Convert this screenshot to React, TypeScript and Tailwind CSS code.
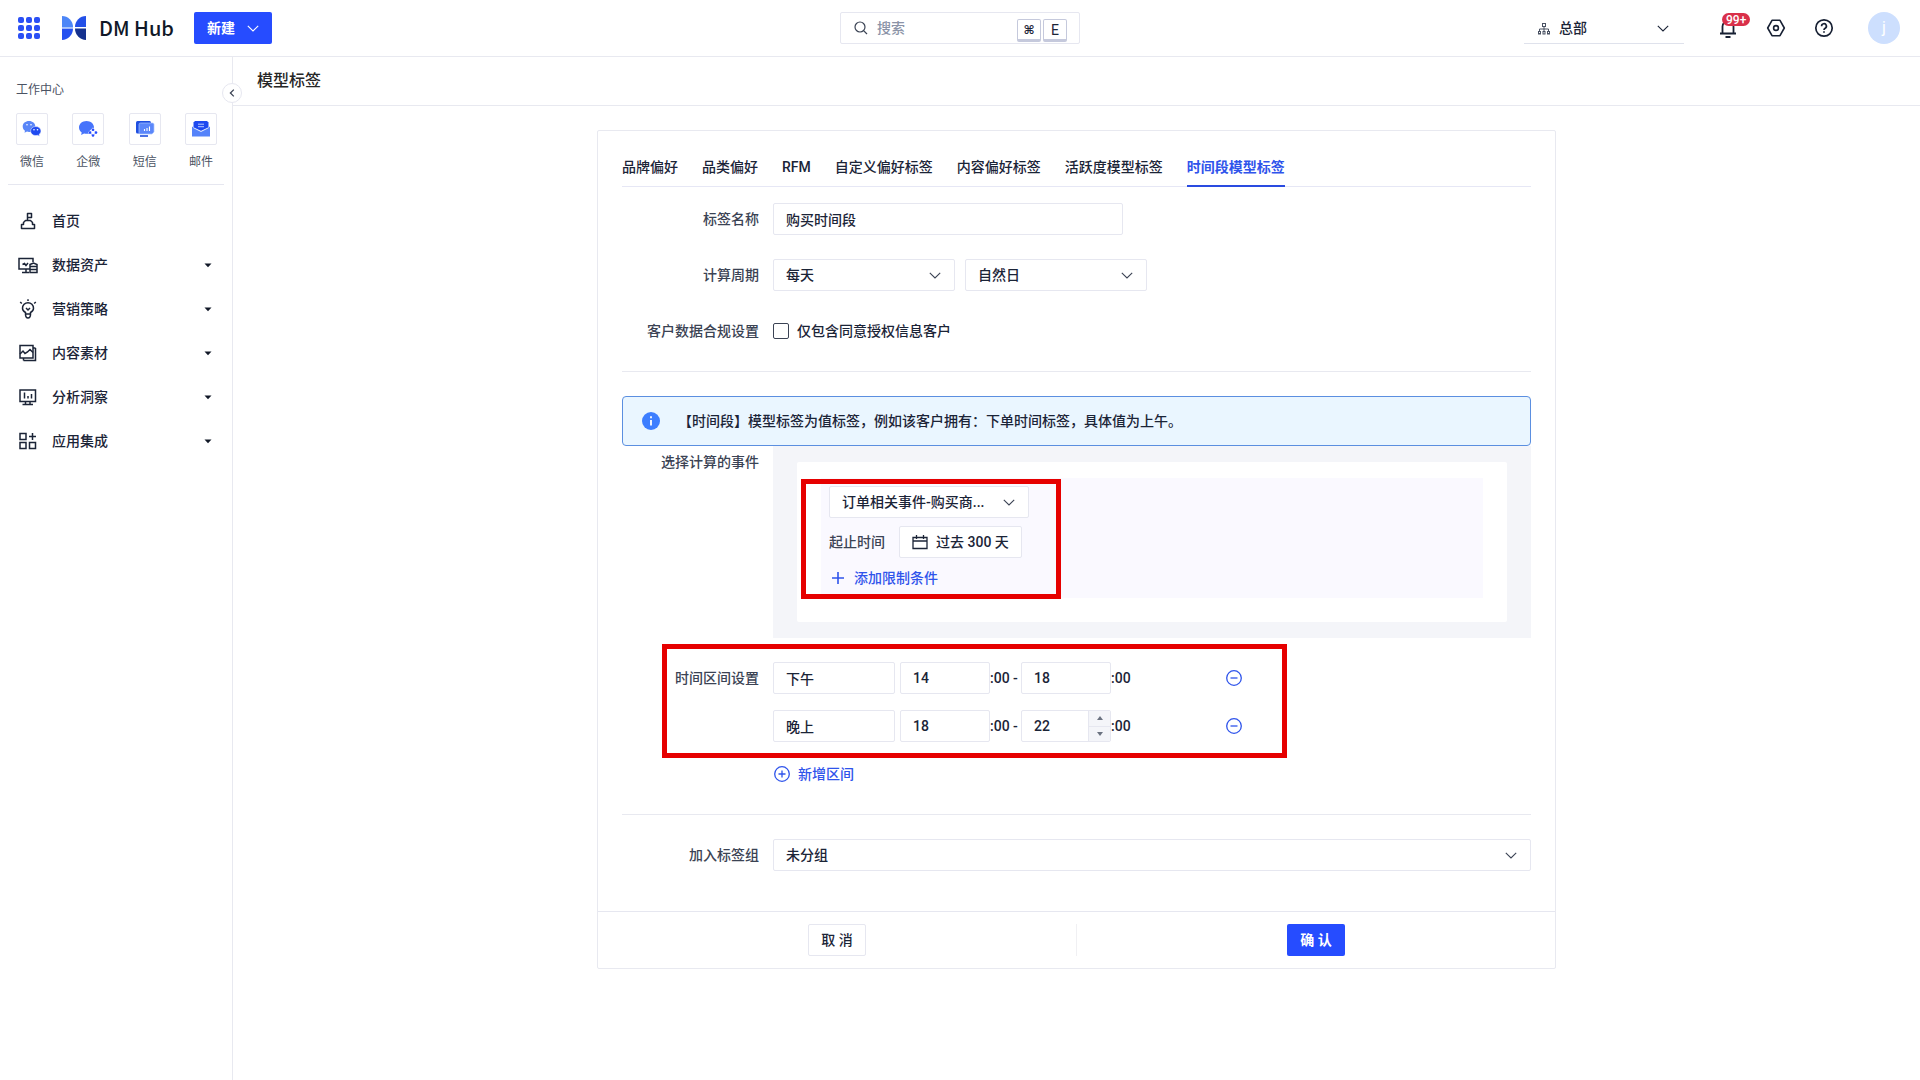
import { useState } from 'react';
import type { ReactNode } from 'react';

const quickLinks = [
  { label: '微信', icon: <WechatIcon /> },
  { label: '企微', icon: <WecomIcon /> },
  { label: '短信', icon: <SmsIcon /> },
  { label: '邮件', icon: <MailIcon /> },
];

const menu = [
  { label: '首页', icon: <HomeIcon />, children: false },
  { label: '数据资产', icon: <DataIcon />, children: true },
  { label: '营销策略', icon: <BulbIcon />, children: true },
  { label: '内容素材', icon: <ContentIcon />, children: true },
  { label: '分析洞察', icon: <InsightIcon />, children: true },
  { label: '应用集成', icon: <AppsIcon />, children: true },
];

const tabs = ['品牌偏好', '品类偏好', 'RFM', '自定义偏好标签', '内容偏好标签', '活跃度模型标签', '时间段模型标签'];

const ranges = [
  { name: '下午', from: 14, to: 18, stepper: false },
  { name: '晚上', from: 18, to: 22, stepper: true },
];

const fieldClass = 'h-8 rounded-xs border border-[#e6e7f0] bg-white text-sm text-[#1b2437] outline-none focus:border-[#264cff]';

export default function App() {
  return (
    <div className="flex min-h-screen flex-col bg-white font-['Roboto','Noto_Sans_CJK_SC',sans-serif] text-sm text-[#1b2437]">
      <Header />
      <div className="flex flex-1">
        <Sidebar />
        <main className="min-w-0 flex-1">
          <h1 className="border-b border-[#e8e9f0] py-3 pl-6 text-base font-medium text-[#262626]">模型标签</h1>
          <TagForm />
        </main>
      </div>
    </div>
  );
}

function Header() {
  return (
    <header className="flex h-[57px] items-center border-b border-[#e8e9f0] px-4">
      <div className="flex flex-1 items-center">
        <button aria-label="应用" className="flex size-[26px] items-center justify-center">
          <svg width="22" height="22" viewBox="0 0 22 22" fill="#2b50f5">
            {[0, 8, 16].map((y) => [0, 8, 16].map((x) => <rect key={`${x}-${y}`} x={x} y={y} width="6" height="6" rx="2" />))}
          </svg>
        </button>
        <a href="#" className="ml-5 flex items-center gap-[13px]">
          <svg width="24" height="24" viewBox="0 0 24 24">
            <path d="M0 0A11 11 0 0 1 11 11H0Z" fill="#4c86f7" />
            <path d="M24 0A11 11 0 0 0 13 11H24Z" fill="#2350e8" />
            <path d="M0 12.5H11A11.5 11.5 0 0 1 0 24Z" fill="#2450f0" />
            <path d="M24 12.5H13A11.5 11.5 0 0 0 24 24Z" fill="#15328f" />
            <path d="M0 11H11V12.500H0Z" fill="#a9c5fb" />
          </svg>
          <span className="font-['Noto_Sans_CJK_SC',sans-serif] text-xl leading-6 font-medium text-[#111827]">DM Hub</span>
        </a>
        <button className="ml-5 flex h-8 w-[78px] items-center justify-center gap-3 rounded-xs bg-[#264cff] font-bold text-white">
          新建
          <Chevron />
        </button>
      </div>

      <div className="relative w-60">
        <svg className="absolute top-[9px] left-[14px]" width="14" height="14" viewBox="0 0 14 14" fill="none" stroke="#3b4354" strokeWidth="1.2">
          <circle cx="6" cy="6" r="5" />
          <path d="M9.600 9.600 13 13" />
        </svg>
        <input type="search" aria-label="搜索" placeholder="搜索" className={`${fieldClass} w-full pr-16 pl-9 font-medium placeholder:text-[#8b93a7]`} />
        <div className="absolute top-[7px] right-[13px] flex gap-0.5 text-xs">
          <kbd className="flex h-[23px] w-6 items-center justify-center rounded-xs border border-b-3 border-[#c5c9dc] bg-white font-['DejaVu_Sans','Noto_Sans_CJK_SC',sans-serif] font-bold">⌘</kbd>
          <kbd className="flex h-[23px] w-6 items-center justify-center rounded-xs border border-b-3 border-[#c5c9dc] bg-white font-['Roboto',sans-serif] text-sm">E</kbd>
        </div>
      </div>

      <div className="flex flex-1 items-center justify-end">
        <div className="relative w-40">
          <svg className="absolute top-[11px] left-[14px]" width="12" height="12" viewBox="0 0 12 12" fill="none" stroke="#4a5263">
            <rect x="4.500" y=".5" width="3" height="3" />
            <rect x=".5" y="8.500" width="2" height="2.500" />
            <rect x="5" y="8.500" width="2" height="2.500" />
            <rect x="9.500" y="8.500" width="2" height="2.500" />
            <path d="M6 3.500V8.500M1.500 8.500V6H10.500V8.500" />
          </svg>
          <select aria-label="组织" className="h-8 w-full appearance-none border-b border-[#dfe2ec] bg-transparent pl-[35px] font-medium outline-none">
            <option>总部</option>
          </select>
          <Chevron className="pointer-events-none absolute top-[13px] right-[15px]" />
        </div>
        <button aria-label="通知" className="relative ml-8 flex size-6 items-center justify-center">
          <svg width="20" height="20" viewBox="0 0 20 20" fill="none" stroke="#172033" strokeWidth="1.8">
            <path d="M4.500 15.500V8.500a5.500 5.500 0 0 1 11 0V15.500M2 15.500H18M7.500 19H12.500" />
          </svg>
          <span className="absolute -top-[3px] left-[6px] flex h-[13px] items-center rounded-full bg-[#d9304a] px-1 text-xs font-medium text-white">99+</span>
        </button>
        <button aria-label="设置" className="ml-6 flex size-6 items-center justify-center">
          <svg width="20" height="20" viewBox="0 0 20 20" fill="none" stroke="#172033" strokeWidth="1.6">
            <path d="M6 2.300H14L18.300 10 14 17.700H6L1.700 10Z" strokeLinejoin="round" />
            <circle cx="10" cy="10" r="2.400" />
          </svg>
        </button>
        <button aria-label="帮助" className="ml-6 flex size-6 items-center justify-center">
          <svg width="20" height="20" viewBox="0 0 20 20" fill="none" stroke="#172033" strokeWidth="1.700">
            <circle cx="10" cy="10" r="8.200" />
            <path d="M7.600 8.200a2.400 2.400 0 1 1 3.600 2c-.8.5-1.200.8-1.200 1.700M10 13.200v1.600" />
          </svg>
        </button>
        <button className="mr-1 ml-8 size-8 rounded-full bg-[#cddffe] text-base text-white">j</button>
      </div>
    </header>
  );
}

function Sidebar() {
  return (
    <aside className="relative w-[233px] shrink-0 border-r border-[#e8e9f0] pt-6">
      <h2 className="px-4 text-xs leading-[18px] text-[#4b5363]">工作中心</h2>
      <div className="flex justify-between pt-[14px] pr-[15px] pl-4">
        {quickLinks.map((link) => (
          <a key={link.label} href="#" className="flex w-8 flex-col items-center gap-2 text-xs leading-[18px] whitespace-nowrap text-[#4b5363]">
            <span className="flex size-8 items-center justify-center rounded-xs border border-[#e6e7f0]">{link.icon}</span>
            {link.label}
          </a>
        ))}
      </div>
      <nav className="mx-2 mt-[13px] border-t border-[#e6e7f0] pt-[14px]">
        {menu.map((item) => (
          <a key={item.label} href="#" className="flex h-11 items-center pr-3 pl-2 font-medium">
            <span className="mr-3 flex size-6 items-center justify-center">{item.icon}</span>
            <span className="flex-1">{item.label}</span>
            {item.children && (
              <svg width="8" height="5" viewBox="0 0 8 5" fill="#111827">
                <path d="M.5 .5H7.500L4 4.300Z" />
              </svg>
            )}
          </a>
        ))}
      </nav>
      <button aria-label="收起" className="absolute top-[26px] -right-[10px] flex size-5 items-center justify-center rounded-full border border-[#e6e7f0] bg-white">
        <svg width="6" height="8" viewBox="0 0 6 8" fill="none" stroke="#3b4354" strokeWidth="1.300">
          <path d="M4.800 .6 1.400 4 4.800 7.400" />
        </svg>
      </button>
    </aside>
  );
}

function TagForm() {
  const [activeTab, setActiveTab] = useState('时间段模型标签');

  return (
    <form className="mx-auto my-6 w-full max-w-[959px] rounded-xs border border-[#e8e9f0]" onSubmit={(e) => e.preventDefault()}>
      <div className="px-6 pt-4 pb-10">
        <div role="tablist" className="flex h-10 gap-6 border-b border-[#e6e7f5]">
          {tabs.map((tab) => (
            <button
              key={tab}
              type="button"
              role="tab"
              aria-selected={tab === activeTab}
              onClick={() => setActiveTab(tab)}
              className={
                tab === activeTab
                  ? '-mb-px h-10 border-b-2 border-[#2a4be0] pt-0.5 font-bold text-[#2f54eb]'
                  : 'h-10 border-b-2 border-transparent pt-0.5 font-medium'
              }
            >
              {tab}
            </button>
          ))}
        </div>

        <div className="mt-4 flex flex-col gap-6">
          <Row label="标签名称" htmlFor="tag-name">
            <input id="tag-name" defaultValue="购买时间段" className={`${fieldClass} w-[350px] px-3 font-medium`} />
          </Row>
          <Row label="计算周期" htmlFor="cycle">
            <div className="flex gap-2.5">
              <Select id="cycle" value="每天" className="w-[182px]" />
              <Select ariaLabel="周期类型" value="自然日" className="w-[182px]" />
            </div>
          </Row>
          <Row label="客户数据合规设置" htmlFor="consent">
            <label className="flex h-8 w-fit items-center gap-2 font-medium">
              <input id="consent" type="checkbox" className="size-4 appearance-none rounded-xs border border-[#3b4354] bg-white checked:bg-[#264cff]" />
              仅包含同意授权信息客户
            </label>
          </Row>
        </div>

        <hr className="my-6 border-[#e8e9f0]" />

        <div role="note" className="flex h-[50px] items-center gap-[18px] rounded-sm border border-[#5b8fe0] bg-[#eaf6ff] px-[19px] font-medium">
          <svg width="18" height="18" viewBox="0 0 18 18">
            <circle cx="9" cy="9" r="9" fill="#3d7eff" />
            <path d="M9 4.200v2M9 8v5.500" stroke="#fff" strokeWidth="1.800" />
          </svg>
          【时间段】模型标签为值标签，例如该客户拥有：下单时间标签，具体值为上午。
        </div>

        <Row label="选择计算的事件" htmlFor="event">
          <div className="bg-[#f4f5f9] px-6 py-4">
            <div className="relative rounded-xs bg-white px-6 pt-4 pb-6">
              <div className="flex flex-col gap-2 bg-[#faf9ff] p-2">
                <Select id="event" value="订单相关事件-购买商..." className="w-[200px]" />
                <div className="flex items-center gap-[14px] font-medium text-[#3b4354]">
                  起止时间
                  <button type="button" className={`${fieldClass} flex items-center gap-2 px-3 font-medium`}>
                    <svg width="16" height="16" viewBox="0 0 16 16" fill="none" stroke="#1b2437" strokeWidth="1.300">
                      <path d="M1 3.500H15V14.500H1ZM1 7H15M4.500 1V5M11.500 1V5" />
                    </svg>
                    过去 300 天
                  </button>
                </div>
                <button type="button" className="flex h-6 w-fit items-center gap-2.5 pl-[3px] font-medium text-[#2f54eb]">
                  <svg width="12" height="12" viewBox="0 0 12 12" stroke="currentColor" strokeWidth="1.600">
                    <path d="M0 6H12M6 0V12" />
                  </svg>
                  添加限制条件
                </button>
              </div>
              <div className="pointer-events-none absolute top-[17px] left-1 h-[120px] w-[260px] border-5 border-[#e60000]" />
            </div>
          </div>
        </Row>

        <div className="relative mt-6">
          <Row label="时间区间设置" htmlFor="range-0">
            <div className="flex flex-col gap-4">
              {ranges.map((range, i) => (
                <div key={range.name} className="flex items-center font-medium">
                  <input id={`range-${i}`} aria-label="区间名称" defaultValue={range.name} className={`${fieldClass} mr-[5px] w-[122px] px-3`} />
                  <HourInput label="开始时间" value={range.from} />
                  <span className="w-[31px] whitespace-nowrap">:00 -</span>
                  <HourInput label="结束时间" value={range.to} stepper={range.stepper} />
                  <span className="w-[115px]">:00</span>
                  <button type="button" aria-label="删除区间" className="text-[#2f54eb]">
                    <CircleIcon d="M4.500 8H11.500" />
                  </button>
                </div>
              ))}
            </div>
          </Row>
          <div className="pointer-events-none absolute -top-[18px] left-10 h-[114px] w-[625px] border-5 border-[#e60000]" />
        </div>
        <button type="button" className="mt-4 ml-[152px] flex h-8 items-center gap-2 font-medium text-[#2f54eb]">
          <CircleIcon d="M4.500 8H11.500M8 4.500V11.500" />
          新增区间
        </button>

        <hr className="my-6 border-[#e8e9f0]" />

        <Row label="加入标签组" htmlFor="group">
          <Select id="group" value="未分组" className="w-full" />
        </Row>
      </div>

      <div className="flex border-t border-[#e6e7f0] py-3">
        <div className="flex flex-1 justify-center border-r border-[#f0f0f3]">
          <button type="button" className={`${fieldClass} px-3 font-medium`}>取 消</button>
        </div>
        <div className="flex flex-1 justify-center">
          <button type="submit" className="h-8 rounded-xs bg-[#264cff] px-[13px] font-bold text-white">确 认</button>
        </div>
      </div>
    </form>
  );
}

function Row({ label, htmlFor, children }: { label: string; htmlFor: string; children: ReactNode }) {
  return (
    <div className="grid grid-cols-[137px_1fr] gap-x-[14px]">
      <label htmlFor={htmlFor} className="text-right leading-8 font-medium text-[#3b4354]">{label}</label>
      {children}
    </div>
  );
}

function Select({ id, ariaLabel, value, className }: { id?: string; ariaLabel?: string; value: string; className: string }) {
  return (
    <div className={`relative ${className}`}>
      <select id={id} aria-label={ariaLabel} className={`${fieldClass} w-full appearance-none pr-8 pl-3 font-medium`}>
        <option>{value}</option>
      </select>
      <Chevron className="pointer-events-none absolute top-[13px] right-[14px] text-[#3b4354]" />
    </div>
  );
}

function HourInput({ label, value, stepper }: { label: string; value: number; stepper?: boolean }) {
  return (
    <div className="relative w-[90px]">
      <input type="number" aria-label={label} min={0} max={24} defaultValue={value} className={`${fieldClass} w-full px-3 [appearance:textfield]`} />
      {stepper && (
        <div className="absolute top-px right-px bottom-px flex w-[22px] flex-col border-l border-[#e6e7f0] bg-[#f4f5f9]">
          <button type="button" aria-label="增加" className="flex flex-1 items-center justify-center border-b border-[#e6e7f0]">
            <svg width="6" height="4" viewBox="0 0 6 4" fill="#6b7280"><path d="M3 0 6 4H0Z" /></svg>
          </button>
          <button type="button" aria-label="减少" className="flex flex-1 items-center justify-center">
            <svg width="6" height="4" viewBox="0 0 6 4" fill="#6b7280"><path d="M0 0H6L3 4Z" /></svg>
          </button>
        </div>
      )}
    </div>
  );
}

function Chevron({ className }: { className?: string }) {
  return (
    <svg className={className} width="12" height="7" viewBox="0 0 12 7" fill="none" stroke="currentColor" strokeWidth="1.100">
      <path d="M.8 .8 6 6 11.200 .8" />
    </svg>
  );
}

function CircleIcon({ d }: { d: string }) {
  return (
    <svg width="16" height="16" viewBox="0 0 16 16" fill="none" stroke="currentColor" strokeWidth="1.300">
      <circle cx="8" cy="8" r="7.300" />
      <path d={d} />
    </svg>
  );
}

function WechatIcon() {
  return (
    <svg width="20" height="18" viewBox="0 0 20 18">
      <path d="M7 1C3.400 1 .7 3.300 .7 6.400c0 1.800.9 3.300 2.300 4.300L2.500 12.800 5 11.600c.7.2 1.300.3 2 .3 3.600 0 6.300-2.400 6.300-5.500S10.600 1 7 1Z" fill="#5a86f8" />
      <path d="M13.800 6.500c-3 0-5.200 2-5.200 4.500s2.200 4.600 5.200 4.600c.6 0 1.200-.1 1.700-.3l2.100 1-.5-1.900c1.200-.8 1.900-2 1.900-3.400 0-2.500-2.200-4.500-5.200-4.500Z" fill="#1f4af0" stroke="#fff" strokeWidth=".5" />
      <g fill="#fff">
        <circle cx="5" cy="4.800" r=".8" />
        <circle cx="9" cy="4.800" r=".8" />
        <circle cx="12" cy="9.800" r=".8" />
        <circle cx="15.500" cy="9.800" r=".8" />
      </g>
    </svg>
  );
}

function WecomIcon() {
  return (
    <svg width="20" height="18" viewBox="0 0 20 18">
      <path d="M8.500 1C4.300 1 1 3.800 1 7.400c0 2 1 3.800 2.700 5l-.6 2.700 3-1.600c.8.2 1.600.3 2.400.3 4.200 0 7.500-2.800 7.500-6.400S12.700 1 8.500 1Z" fill="#4774fb" />
      <path d="M15 7.500 20 12.500 15 17.500 10 12.500Z" fill="#fff" />
      <g fill="#264cff">
        <circle cx="15" cy="9.700" r="1.300" />
        <circle cx="18" cy="12.600" r="1.300" />
        <circle cx="15" cy="15.500" r="1.300" />
        <circle cx="12" cy="12.600" r="1.300" />
      </g>
      <path d="M15 9.700 18 12.600 15 15.500 12 12.600Z" fill="none" stroke="#264cff" strokeWidth=".7" strokeDasharray="1.500 1" />
    </svg>
  );
}

function SmsIcon() {
  return (
    <svg width="20" height="18" viewBox="0 0 20 18">
      <rect x="1" y="1" width="15" height="12.500" rx="1.500" fill="#1f4fe0" />
      <path d="M5.500 3H17.500a1.500 1.500 0 0 1 1.500 1.500V12L17 14H5.500A1.500 1.500 0 0 1 4 12.500V4.500A1.500 1.500 0 0 1 5.500 3Z" fill="#5b87fa" stroke="#a9c4ff" strokeWidth=".7" />
      <path d="M9.500 11V9M12 11V8M14.500 11V6.500" stroke="#fff" strokeWidth="1.100" />
      <path d="M5 16H13" stroke="#1f4fe0" strokeWidth="1.600" />
    </svg>
  );
}

function MailIcon() {
  return (
    <svg width="20" height="18" viewBox="0 0 20 18">
      <path d="M4 1H16L17.500 2.500V7.500L10 11 2.500 7.500V2.500Z" fill="#1f4af0" />
      <path d="M1 6.500 2.500 7.500 10 11.500 17.500 7.500 19 6.500V16.500H1Z" fill="#5583fa" />
      <path d="M2.500 7.800 10 11.500 17.500 7.800" fill="none" stroke="#fff" strokeWidth=".7" />
      <path d="M7 4.200H13M7 6.700H13" stroke="#c9d8ff" strokeWidth=".9" />
    </svg>
  );
}

function MenuSvg({ children }: { children: ReactNode }) {
  return (
    <svg width="20" height="20" viewBox="0 0 20 20" fill="none" stroke="#1b2437" strokeWidth="1.500">
      {children}
    </svg>
  );
}

function HomeIcon() {
  return (
    <MenuSvg>
      <path d="M9.500 9.500V2.500H13.500V6.500H9.500M3.500 17.500V13.500H5.500V11.500L7.500 9.500H12.500L14.500 11.500V13.500H16.500V17.500Z" strokeLinejoin="round" />
    </MenuSvg>
  );
}

function DataIcon() {
  return (
    <MenuSvg>
      <path d="M12 14H1V3.500H15V7M4 17.500H11M8 14V17.500M4.500 9.500 6.500 8.500 8 10.500 10 8" />
      <path d="M12 9.500 15.500 8 19 9.500V17.500H12ZM12 11.500H19M12 14.500H19" />
    </MenuSvg>
  );
}

function BulbIcon() {
  return (
    <MenuSvg>
      <path d="M7.500 15V13.500C5.500 12.500 4.500 11 4.500 9.200a5.500 5.500 0 0 1 11 0C15.500 11 14.500 12.500 12.500 13.500V15ZM7.500 15C7.500 18 8.500 19 10 19S12.500 18 12.500 15" />
      <path d="M8 9 10 11 12 9M10 .2V2M2.200 3 3.800 4.500M17.800 3 16.200 4.500" />
    </MenuSvg>
  );
}

function ContentIcon() {
  return (
    <MenuSvg>
      <path d="M2 2.500H15V15H2ZM5.500 17.500H17.500V5M15 5H17.500M5.500 15V17.500" />
      <path d="M2 11 5 8 7 10.500 9.500 9 12 6.500 15 9.500" />
    </MenuSvg>
  );
}

function InsightIcon() {
  return (
    <MenuSvg>
      <path d="M2 3H17.500V14.500H2ZM4.500 17.500H15M7.500 14.500V17M12 14.500V17M6.500 5.500V11.500M10 9V11.500M13.500 7V11.500" />
    </MenuSvg>
  );
}

function AppsIcon() {
  return (
    <MenuSvg>
      <path d="M2 2.500H8V8.500H2ZM2 11.500H8V17.500H2ZM11.500 11.500H17.500V17.500H11.500ZM14.500 2V9M11 5.500H18" />
    </MenuSvg>
  );
}
